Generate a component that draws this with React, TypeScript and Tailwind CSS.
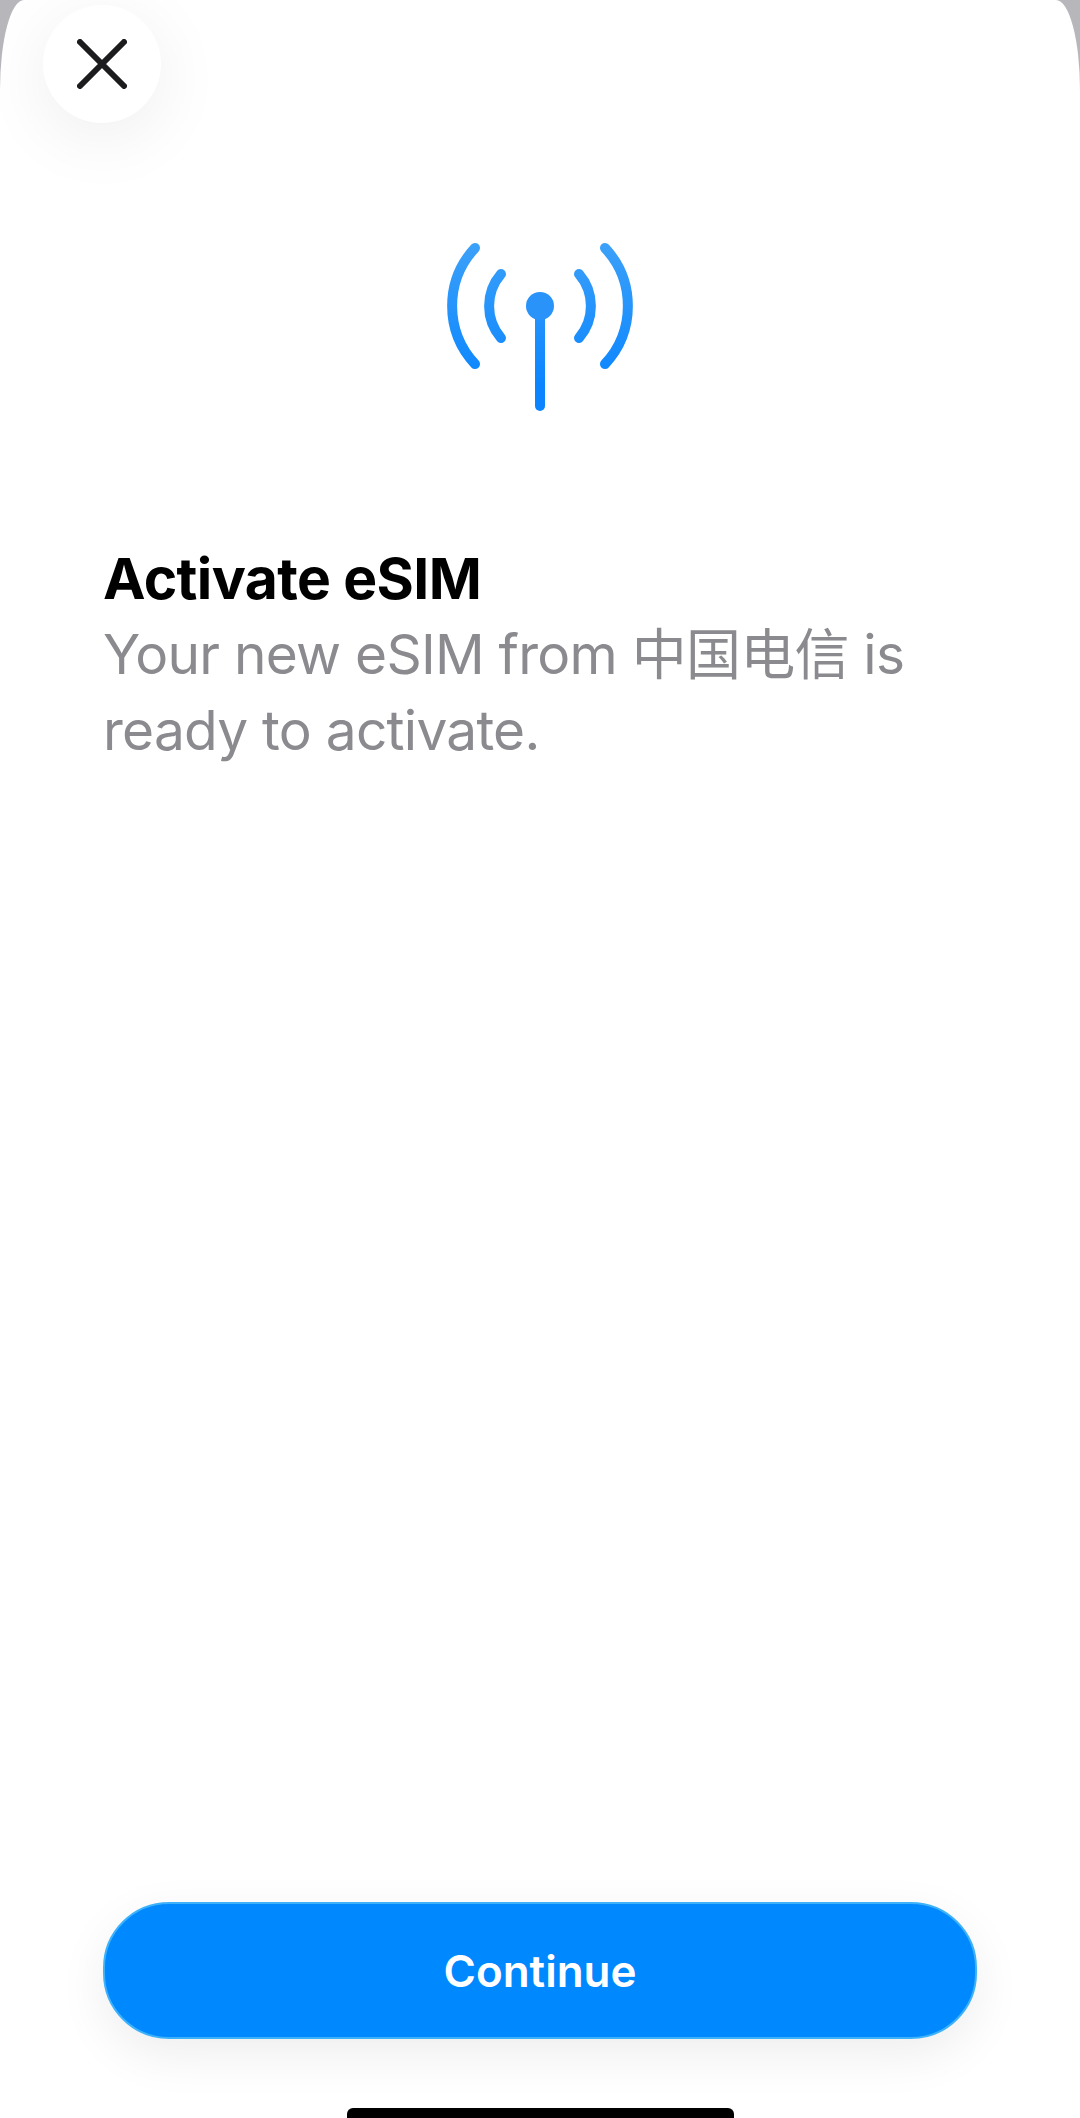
export default function App() {
  return (
    <div className="w-[1080px] h-[2118px] bg-[#b6b6bb] overflow-hidden" style={{ fontFamily: '"Inter", "Noto Sans CJK SC", sans-serif' }}>
      <div className="w-full h-full bg-white rounded-tl-[24px_90px] rounded-tr-[24px_90px] flex flex-col">
        <button className="mt-[5px] ml-[43px] w-[118px] h-[118px] shrink-0 rounded-full bg-white shadow-[0_14px_70px_rgba(0,0,0,0.07)] flex items-center justify-center">
          <svg width="50" height="50" viewBox="0 0 50 50" fill="none" stroke="#1c1c1e" strokeWidth="6" strokeLinecap="round">
            <path d="M3 3 L47 47 M47 3 L3 47" />
          </svg>
        </button>
        <div className="mt-[113px] flex justify-center shrink-0">
          <svg width="190" height="180" viewBox="0 0 190 180" fill="none" stroke="url(#g)" strokeWidth="10" strokeLinecap="round">
            <defs>
              <linearGradient id="g" gradientUnits="userSpaceOnUse" x1="0" y1="0" x2="0" y2="150">
                <stop offset="0" stopColor="#3ea2f8" />
                <stop offset="1" stopColor="#0a85ff" />
              </linearGradient>
            </defs>
            <path d="M30 12 A85 85 0 0 0 30 128" />
            <path d="M160 12 A85 85 0 0 1 160 128" />
            <path d="M56 38 A49 49 0 0 0 56 102" />
            <path d="M134 38 A49 49 0 0 1 134 102" />
            <path d="M95 70 L95 170" />
            <circle cx="95" cy="70" r="14" fill="#2a93fa" stroke="none" />
          </svg>
        </div>
        <div className="mt-[126px] px-[103px] shrink-0">
          <h1 className="text-[57px] leading-[74px] font-bold text-black tracking-[-0.6px]">Activate eSIM</h1>
          <p className="text-[55px] leading-[76px] font-normal text-[#8b8b8f] tracking-[-0.75px]">Your new eSIM from 中国电信 is ready to activate.</p>
        </div>
        <div className="flex-1" />
        <div className="px-[103px] shrink-0">
          <button className="w-full h-[137px] rounded-[66px] bg-[#0088ff] border-2 border-[#3db2fb] text-white text-[44px] font-semibold shadow-[0_16px_50px_rgba(0,0,0,0.07)]">Continue</button>
        </div>
        <div className="mt-[69px] mx-auto w-[387px] h-[10px] bg-black rounded-t-[6px] shrink-0" />
      </div>
    </div>
  );
}
